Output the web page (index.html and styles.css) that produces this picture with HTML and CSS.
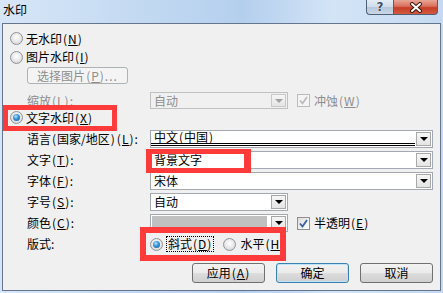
FILE: index.html
```html
<!DOCTYPE html>
<html>
<head>
    <title>水印</title>
    <link rel="stylesheet" href="styles.css">
</head>
<body>
    <div class="window">
        <!-- 标题栏 -->
        <div class="titlebar">
            <span class="title">水印</span>
            <div class="caption">
                <span class="cap help">?</span>
                <span class="cap close">
                    <svg width="16" height="11" viewBox="0 0 16 11">
                        <path d="M4 2 L12 9 M12 2 L4 9" stroke="#3b1a14" stroke-width="4" stroke-linecap="round"/>
                        <path d="M4 2 L12 9 M12 2 L4 9" stroke="#fff" stroke-width="2" stroke-linecap="round"/>
                    </svg>
                </span>
            </div>
        </div>

        <div class="client">
            <div class="row opt first">
                <span class="radio"></span>
                <span>无水印<span class="key">(<u>N</u>)</span></span>
            </div>
            <div class="row opt">
                <span class="radio"></span>
                <span>图片水印<span class="key">(<u>I</u>)</span></span>
            </div>
            <div class="row pic">
                <span class="btn disabled wide">选择图片<span class="key">(<u>P</u>)...</span></span>
            </div>
            <div class="row field scale">
                <span class="label disabled-text">缩放<span class="key">(<u>L</u>):</span></span>
                <div class="combo short disabled"><span class="val">自动</span><span class="drop"></span></div>
                <span class="check disabled"><svg width="11" height="11" viewBox="0 0 11 11"><path d="M2 5.5 L4.5 8.5 L9 2" fill="none" stroke="#b8b8b8" stroke-width="1.6"/></svg></span>
                <span class="disabled-text">冲蚀<span class="key">(<u>W</u>)</span></span>
            </div>
            <div class="row opt text-opt">
                <span class="radio on"></span>
                <span>文字水印<span class="key">(<u>X</u>)</span></span>
            </div>
            <div class="row field lang">
                <span class="label">语言<span class="key">(</span>国家/地区<span class="key">)</span><span class="key">(<u>L</u>):</span></span>
                <div class="combo long"><span class="val underlined">中文<span class="key">(</span>中国<span class="key">)</span></span><span class="drop"></span></div>
            </div>
            <div class="row field">
                <span class="label">文字<span class="key">(<u>T</u>):</span></span>
                <div class="combo long"><span class="val">背景文字</span><span class="drop"></span></div>
            </div>
            <div class="row field">
                <span class="label">字体<span class="key">(<u>F</u>):</span></span>
                <div class="combo long"><span class="val">宋体</span><span class="drop"></span></div>
            </div>
            <div class="row field">
                <span class="label">字号<span class="key">(<u>S</u>):</span></span>
                <div class="combo short"><span class="val">自动</span><span class="drop"></span></div>
            </div>
            <div class="row field">
                <span class="label">颜色<span class="key">(<u>C</u>):</span></span>
                <div class="combo short"><span class="val swatch"></span><span class="drop"></span></div>
                <span class="check"><svg width="11" height="11" viewBox="0 0 11 11"><path d="M2 5.5 L4.5 8.5 L9 2" fill="none" stroke="#3a5f9c" stroke-width="1.8"/></svg></span>
                <span>半透明<span class="key">(<u>E</u>)</span></span>
            </div>
            <div class="row field layout">
                <span class="label">版式:</span>
                <span class="radio on"></span>
                <span class="focus">斜式<span class="key">(<u>D</u>)</span></span>
                <span class="radio second"></span>
                <span>水平<span class="key">(<u>H</u>)</span></span>
            </div>
            <div class="row actions">
                <span class="btn">应用<span class="key">(<u>A</u>)</span></span>
                <span class="btn default">确定</span>
                <span class="btn">取消</span>
            </div>

            <!-- 标注红框 -->
            <div class="mark mark-opt"></div>
            <div class="mark mark-text"></div>
            <div class="mark mark-layout"></div>
        </div>
    </div>
</body>
</html>
```

FILE: styles.css
```css
/* 水印对话框 */
body {
    margin: 0;
    font-family: "Noto Sans CJK SC", sans-serif;
    font-size: 12px;
    color: #000;
}
u {
    text-decoration: underline;
}
.key {
    letter-spacing: 1px;
    margin-left: 1px;
}
.window {
    width: 443px;
    height: 293px;
    display: flex;
    flex-direction: column;
    background: linear-gradient(to right, #d7e6f7 0%, #c4daf2 30%, #b4cfee 55%, #d3e4f6 75%, #c5daf1 100%);
}
.titlebar {
    height: 23px;
    display: flex;
    justify-content: space-between;
    align-items: flex-start;
}
.title {
    padding: 3px 0 0 3px;
    line-height: 14px;
}
.caption {
    display: flex;
    margin-right: 5px;
}
.cap {
    height: 15px;
    box-sizing: border-box;
    border: 1px solid #4f5f75;
    border-top: none;
    display: flex;
    align-items: center;
    justify-content: center;
}
.help {
    width: 27px;
    border-right: none;
    border-bottom-left-radius: 4px;
    background: linear-gradient(#e4ecf5 0%, #cfdbe8 50%, #b7c7d9 51%, #c9d7e6 100%);
    color: #3c4f66;
    font-family: "DejaVu Sans", sans-serif;
    font-weight: bold;
    font-size: 12px;
    line-height: 14px;
    text-shadow: 0 0 1px #fff, 0 0 1px #fff;
}
.close {
    width: 45px;
    border-bottom-right-radius: 4px;
    background: linear-gradient(#e9a695 0%, #d8705c 45%, #c53d25 55%, #d65a40 100%);
}
.client {
    flex: 1;
    margin: 0 2px 2px;
    border: 1px solid #64758d;
    background: #f0f0f0;
    position: relative;
    display: flex;
    flex-direction: column;
}
.row {
    display: flex;
    align-items: center;
    height: 18px;
    margin-top: 3px;
    line-height: 14px;
    white-space: nowrap;
}
.opt {
    padding-left: 7px;
    margin-top: 0;
}
.opt.first {
    margin-top: 5px;
    height: 19px;
}
.opt.text-opt {
    height: 17px;
}
.opt .radio {
    margin-right: 3px;
}
.pic {
    padding-left: 24px;
    margin-top: 1px;
    height: 17px;
}
.field {
    padding-left: 24px;
}
.field.scale {
    margin-top: 8px;
    height: 17px;
}
.field.lang {
    margin-top: 4px;
}
.label {
    width: 123px;
}
.disabled-text {
    color: #8d8d8d;
}

/* 单选按钮 */
.radio {
    width: 13px;
    height: 13px;
    box-sizing: border-box;
    border-radius: 50%;
    border: 1px solid #8f9398;
    background: radial-gradient(circle at 50% 40%, #ffffff 0%, #e6e6e6 55%, #c9c9c9 100%);
    display: inline-flex;
    align-items: center;
    justify-content: center;
    flex: none;
}
.radio.on::after {
    content: "";
    width: 7px;
    height: 7px;
    border-radius: 50%;
    background: radial-gradient(circle at 40% 35%, #b8e6ff 0%, #3d98d8 40%, #16528f 100%);
}
.layout .radio {
    margin-right: 4px;
}
.layout .radio.second {
    margin-left: 10px;
}
.focus {
    outline: 1px dotted #000;
    outline-offset: 0;
    padding: 0 1px;
}

/* 下拉框 */
.combo {
    height: 100%;
    box-sizing: border-box;
    border: 1px solid #a4a9b0;
    background: #fff;
    display: flex;
    flex: none;
}
.combo.long {
    width: 283px;
}
.combo.short {
    width: 138px;
}
.combo .val {
    flex: 1;
    padding-left: 3px;
    line-height: 15px;
}
.combo .val.underlined {
    text-decoration: underline;
    border-bottom: 3px double #000;
    margin-bottom: 1px;
    line-height: 12px;
}
.combo .val.swatch {
    background: #c0c0c0;
    margin: 1px 3px 1px 1px;
    padding: 0;
}
.drop {
    width: 15px;
    margin: 1px;
    box-sizing: border-box;
    border: 1px solid #a8a8a8;
    background: linear-gradient(#f6f6f6, #e4e4e4);
    display: flex;
    align-items: center;
    justify-content: center;
}
.drop::after {
    content: "";
    border-left: 4px solid transparent;
    border-right: 4px solid transparent;
    border-top: 4px solid #000;
}
.combo.disabled {
    background: #f0f0f0;
    border-color: #c0c0c0;
    color: #8d8d8d;
}
.combo.disabled .drop {
    border-color: #c8c8c8;
}
.combo.disabled .drop::after {
    border-top-color: #a0a0a0;
}

/* 复选框 */
.check {
    width: 13px;
    height: 13px;
    box-sizing: border-box;
    border: 1px solid #8f8f8f;
    background: linear-gradient(135deg, #dcdcdc, #ffffff);
    margin: 0 4px 0 9px;
    display: flex;
    align-items: center;
    justify-content: center;
    flex: none;
}
.check.disabled {
    border-color: #bcbcbc;
    background: #f4f4f4;
}

/* 按钮 */
.btn {
    width: 73px;
    height: 20px;
    box-sizing: border-box;
    border: 1px solid #707070;
    border-radius: 3px;
    background: linear-gradient(#f2f2f2 0%, #ebebeb 50%, #dddddd 51%, #cfcfcf 100%);
    display: flex;
    align-items: center;
    justify-content: center;
}
.btn.wide {
    width: 101px;
    height: 17px;
}
.btn.disabled {
    border-color: #adb2b5;
    background: #f4f4f4;
    color: #8d8d8d;
}
.btn.default {
    border-color: #3c7fb1;
    box-shadow: inset 0 0 0 1px #bfe3f7;
}
.actions {
    margin-top: 10px;
    height: 20px;
    justify-content: flex-end;
    padding-right: 7px;
    gap: 11px;
}

/* 红色标注框 */
.mark {
    position: absolute;
    box-sizing: border-box;
    border: 5px solid #fd3b3b;
}
.mark-opt {
    left: 0;
    top: 81px;
    width: 114px;
    height: 26px;
}
.mark-text {
    left: 143px;
    top: 125px;
    width: 105px;
    height: 24px;
    border-left-width: 6px;
    border-right-width: 7px;
}
.mark-layout {
    left: 137px;
    top: 203px;
    width: 146px;
    height: 34px;
    border-width: 6px;
}
```
